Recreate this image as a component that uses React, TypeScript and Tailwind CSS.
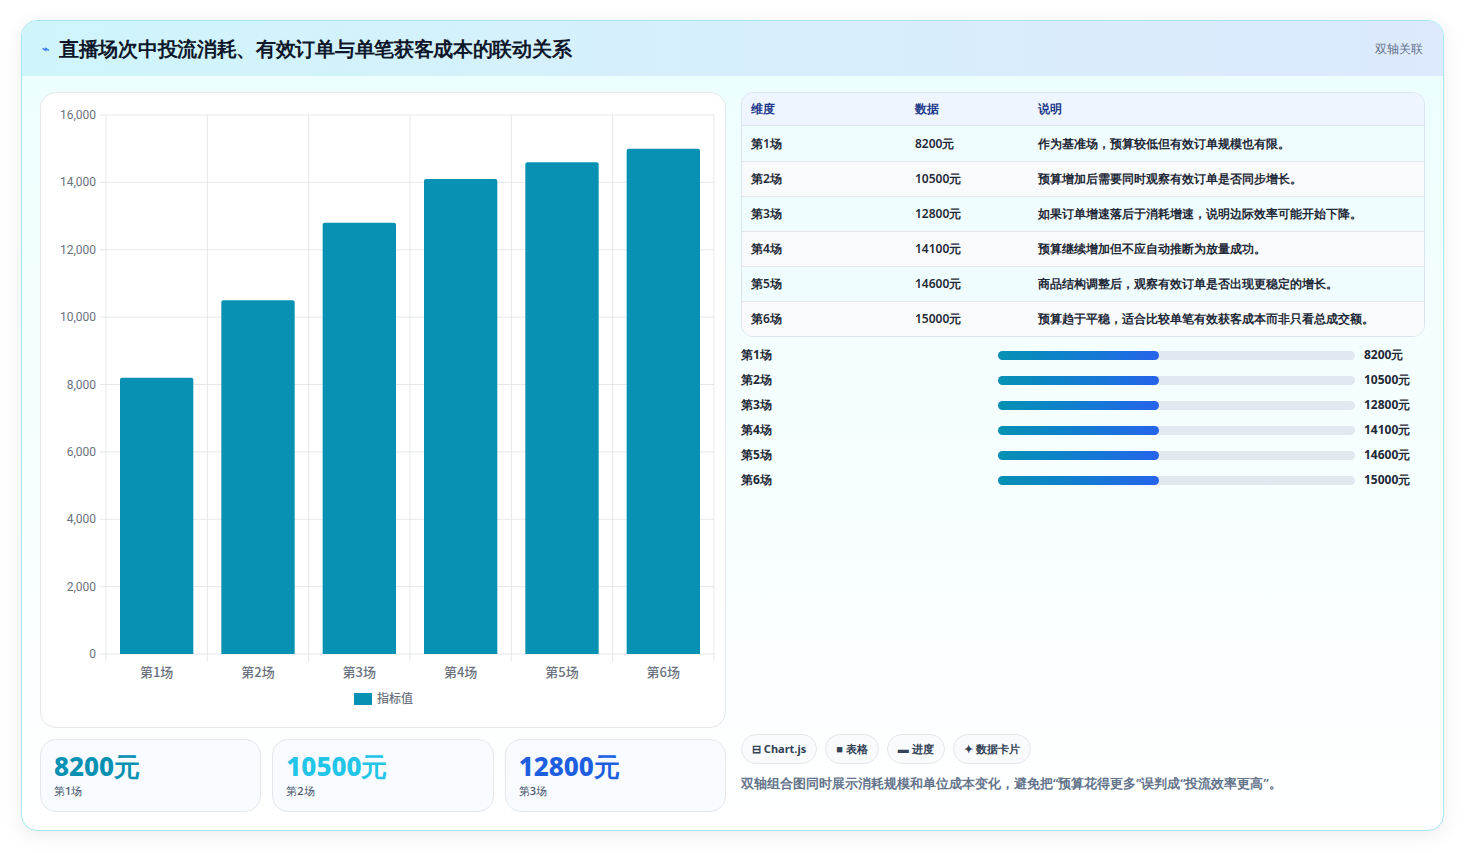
const rows = [
  { k: '第1场', v: 8200, d: '作为基准场，预算较低但有效订单规模也有限。' },
  { k: '第2场', v: 10500, d: '预算增加后需要同时观察有效订单是否同步增长。' },
  { k: '第3场', v: 12800, d: '如果订单增速落后于消耗增速，说明边际效率可能开始下降。' },
  { k: '第4场', v: 14100, d: '预算继续增加但不应自动推断为放量成功。' },
  { k: '第5场', v: 14600, d: '商品结构调整后，观察有效订单是否出现更稳定的增长。' },
  { k: '第6场', v: 15000, d: '预算趋于平稳，适合比较单笔有效获客成本而非只看总成交额。' },
];

function BarChart() {
  // plot area in svg coords (card-relative)
  const L = 65, T = 22, W = 608, H = 539;
  const ticks = [0, 2000, 4000, 6000, 8000, 10000, 12000, 14000, 16000];
  const cw = W / 6;
  return (
    <svg width="685" height="635" className="block">
      {ticks.map((t) => {
        const y = T + H - (t / 16000) * H;
        return (
          <g key={t}>
            <line x1={L} x2={L + W} y1={y} y2={y} stroke="#e5e7eb" />
            <line x1={L - 6} x2={L} y1={y} y2={y} stroke="#e5e7eb" />
            <text x={L - 10} y={y + 4} textAnchor="end" fontSize="12" fill="#6b7280" fontFamily="Roboto, sans-serif">
              {t.toLocaleString('en-US')}
            </text>
          </g>
        );
      })}
      {Array.from({ length: 7 }).map((_, i) => (
        <line key={i} x1={L + i * cw} x2={L + i * cw} y1={T} y2={T + H + 8} stroke="#e5e7eb" />
      ))}
      {rows.map((r, i) => {
        const h = (r.v / 16000) * H;
        const x = L + i * cw + 14;
        return (
          <g key={r.k}>
            <path
              d={`M${x} ${T + H} V${T + H - h + 2} q0 -2 2 -2 H${x + cw - 30} q2 0 2 2 V${T + H} Z`}
              fill="#0891b2"
            />
            <text x={L + i * cw + cw / 2} y={T + H + 23} textAnchor="middle" fontSize="13" fontWeight="500" fill="#6b7280" fontFamily="'Noto Sans CJK SC', sans-serif">
              {r.k}
            </text>
          </g>
        );
      })}
      <rect x="313" y="600" width="18" height="12" fill="#0891b2" />
      <text x="336" y="610" fontSize="12" fontWeight="500" fill="#6b7280" fontFamily="'Noto Sans CJK SC', sans-serif">指标值</text>
    </svg>
  );
}

export default function App() {
  const kpi = [
    { v: '8200元', l: '第1场', c: 'text-[#0891b2]' },
    { v: '10500元', l: '第2场', c: 'text-[#22c5e8]' },
    { v: '12800元', l: '第3场', c: 'text-[#1d5fe0]' },
  ];
  return (
    <div className="min-h-[853px] bg-white px-[21px] pt-[20px] font-['Inter','Noto_Sans_CJK_SC',sans-serif]">
      <div className="h-[811px] overflow-hidden rounded-2xl border border-[#a5e6f3] bg-gradient-to-b from-[#ecfeff] to-white shadow-[0_4px_20px_rgba(0,0,0,0.08)]">
        <div className="flex h-[55px] items-center justify-between bg-gradient-to-r from-[#cff5fb] to-[#dde9fd] px-5">
          <div className="flex items-center gap-2.5">
            <span className="text-[12px] font-bold text-[#3b82f6]">⌁</span>
            <h1 className="text-[20px] font-bold tracking-[-0.3px] text-[#0f172a]">直播场次中投流消耗、有效订单与单笔获客成本的联动关系</h1>
          </div>
          <span className="text-xs font-medium text-[#64748b]">双轴关联</span>
        </div>
        <div className="flex gap-[15px] px-[18px] pt-[16px]">
          <div className="flex w-[686px] flex-col gap-[11px]">
            <div className="h-[636px] rounded-2xl border border-[#e5e7eb] bg-white">
              <BarChart />
            </div>
            <div className="grid grid-cols-3 gap-[11px]">
              {kpi.map((k) => (
                <div key={k.l} className="h-[73px] rounded-2xl border border-[#e5e7eb] bg-[#f8fbff] px-[13px] pt-[9px]">
                  <div className={`text-[26px] font-extrabold leading-[34px] ${k.c}`}>{k.v}</div>
                  <div className="text-[11px] font-medium text-[#475569]">{k.l}</div>
                </div>
              ))}
            </div>
          </div>
          <div className="flex flex-1 flex-col">
            <div className="overflow-hidden rounded-xl border border-[#dbe3ee] text-xs">
              <div className="flex h-[33px] items-center border-b border-[#dbe3ee] bg-[#eef5ff] px-[9px] font-bold text-[#1e3a8a]">
                <span className="w-[164px]">维度</span>
                <span className="w-[123px]">数据</span>
                <span>说明</span>
              </div>
              {rows.map((r, i) => (
                <div
                  key={r.k}
                  className={`flex h-[35px] items-center px-[9px] font-semibold text-[#1f2937] ${i > 0 ? 'border-t border-[#e5e7eb]' : ''} ${i % 2 ? 'bg-[#f8fafc]' : 'bg-[#f0fdff]'}`}
                >
                  <span className="w-[164px]">{r.k}</span>
                  <span className="w-[123px]">{r.v}元</span>
                  <span>{r.d}</span>
                </div>
              ))}
            </div>
            <div className="mt-[10px] flex flex-col gap-[9px]">
              {rows.map((r) => (
                <div key={r.k} className="flex h-4 items-center text-xs font-bold text-[#1f2937]">
                  <span className="w-[257px]">{r.k}</span>
                  <div className="h-[9px] w-[357px] rounded-full bg-[#e2e8f0]">
                    <div className="h-full w-[45%] rounded-full bg-gradient-to-r from-[#0891b2] to-[#2563eb]" />
                  </div>
                  <span className="ml-[9px]">{r.v}元</span>
                </div>
              ))}
            </div>
            <div className="mt-auto pb-[18px]">
              <div className="flex gap-2">
                {['⊟ Chart.js', '■ 表格', '▬ 进度', '✦ 数据卡片'].map((t) => (
                  <span key={t} className="rounded-full border border-[#e5e7eb] bg-[#f8fafc] px-[10px] py-[6px] text-[11px] font-bold text-[#334155]">
                    {t}
                  </span>
                ))}
              </div>
              <p className="mt-[11px] text-[12.5px] font-semibold text-[#64748b]">
                双轴组合图同时展示消耗规模和单位成本变化，避免把“预算花得更多”误判成“投流效率更高”。
              </p>
            </div>
          </div>
        </div>
      </div>
    </div>
  );
}
